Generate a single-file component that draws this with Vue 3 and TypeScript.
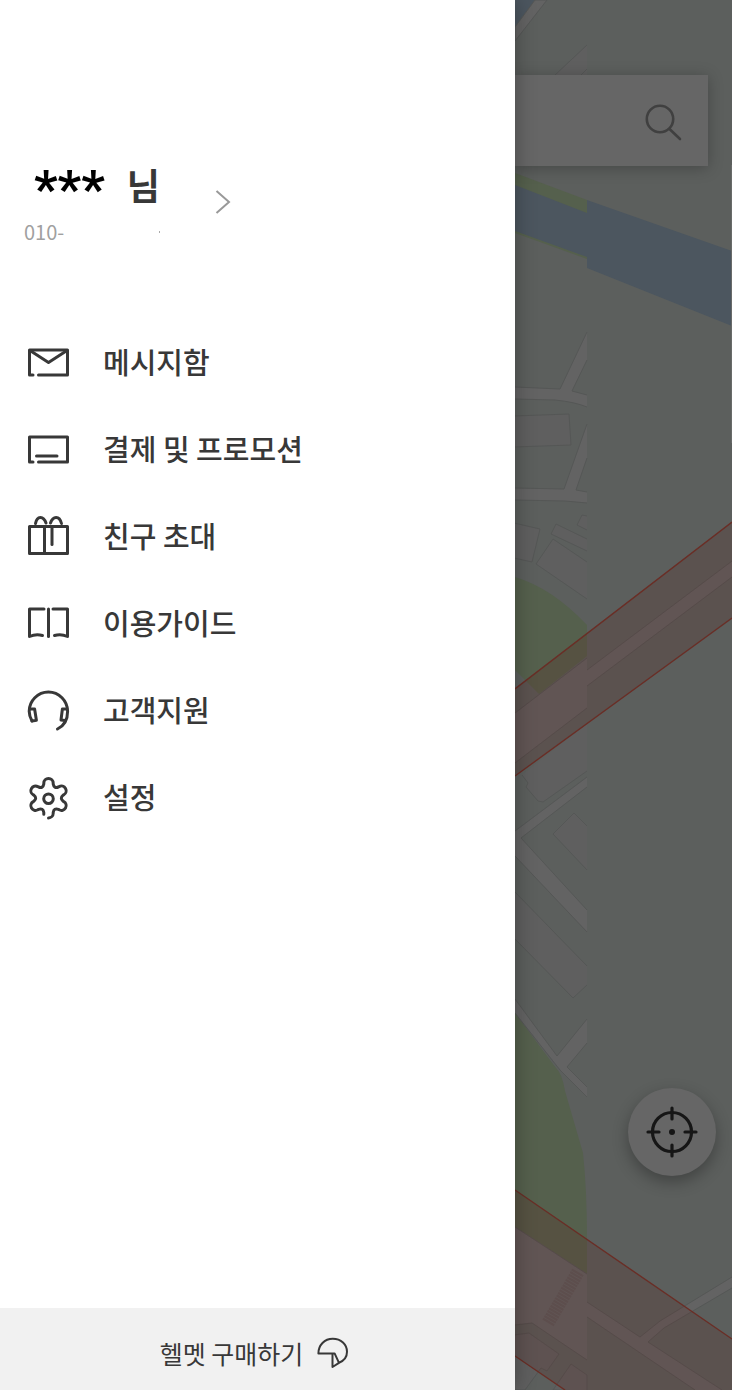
<script setup lang="ts">
interface MenuItem {
  id: string
  label: string
  paths: string[]
}

const round = (n: number) => Math.round(n * 100) / 100

/** Six-lobed gear outline, left open near the tip of the bottom lobe. */
function gearPath(cx: number, cy: number): string {
  const half = 4.7
  const tip = 15
  const base = 14.2
  const valley = 11
  const at = (angle: number, along: number, side: number) => {
    const r = (angle * Math.PI) / 180
    const x = cx + Math.cos(r) * along - Math.sin(r) * side
    const y = cy + Math.sin(r) * along + Math.cos(r) * side
    return `${round(x)} ${round(y)}`
  }
  let d = `M${at(90, tip + 1, half)}L${at(90, base, half)}`
  for (let i = 1; i <= 6; i++) {
    const a = 90 + i * 60
    d += `Q${at(a - 30, valley, 0)} ${at(a, base, -half)}L${at(a, tip, -half)}`
    d += i < 6
      ? `A${half} ${half} 0 0 1 ${at(a, tip, half)}L${at(a, base, half)}`
      : `A${half} ${half} 0 0 1 ${at(a, tip + half, 0)}`
  }
  return d
}

const menu: MenuItem[] = [
  {
    id: 'messages',
    label: '메시지함',
    paths: ['M7 34H3.5V9H41.5V34H12.5', 'M4 9.5L22.5 21.5L41 9.5'],
  },
  {
    id: 'payment',
    label: '결제 및 프로모션',
    paths: ['M7 34H3.5V9H41.5V34H12.5', 'M10.5 28H31'],
  },
  {
    id: 'invite',
    label: '친구 초대',
    paths: [
      'M3.5 11.5H41.5V38.5H3.5Z',
      'M18.5 11.5V38.5',
      'M26 11.5V29.5',
      'M9.5 8.5C11 0.5 17.5 0.5 20 8',
      'M24.5 8C27 0.5 33.5 0.5 35.5 8.5',
    ],
  },
  {
    id: 'guide',
    label: '이용가이드',
    paths: [
      'M18 7H3.5V34.5Q10 31.5 16.5 33.5',
      'M22.5 7V34.5',
      'M27 7H41.5V34.5Q35 31.5 28.5 33.5',
    ],
  },
  {
    id: 'support',
    label: '고객지원',
    paths: [
      'M6 32C4 28.5 3.2 25.5 3.2 22.3A19.2 19.2 0 0 1 41.6 22.3C41.6 30.5 38 37 31.5 40',
      'M4 20H8.6L10.4 31.3L6 32',
      'M41 20H36.4L35 31L39 31.5',
    ],
  },
  {
    id: 'settings',
    label: '설정',
    paths: [gearPath(22.5, 22.2), 'M27.3 22.7A4.8 4.8 0 1 1 17.7 22.7A4.8 4.8 0 1 1 27.3 22.7'],
  },
]
</script>

<template>
  <div class="screen">
    <aside class="drawer">
      <button class="profile" type="button">
        <span class="identity">
          <span class="name"><span class="mask">***</span><span class="suffix">님</span></span>
          <span class="phone"><span>010-</span><span class="speck"></span></span>
        </span>
        <svg class="chevron" viewBox="0 0 18 26" aria-hidden="true">
          <path d="M2.5 2L15 13L2.5 24" />
        </svg>
      </button>

      <nav class="menu">
        <a v-for="item in menu" :key="item.id" class="item" :href="`#${item.id}`">
          <svg class="icon" viewBox="0 0 44 44" aria-hidden="true">
            <path v-for="(d, i) in item.paths" :key="i" :d="d" />
          </svg>
          <span class="label">{{ item.label }}</span>
        </a>
      </nav>

      <a class="helmet" href="#helmet">
        <span>헬멧 구매하기</span>
        <svg viewBox="0 0 32 32" aria-hidden="true">
          <path d="M1.4 16.4C1.4 8 7.5 1.8 15.8 1.8C24 1.8 30 7.5 30 14.8C30 19.8 27 23.8 22 25.8L17.6 16.4Z" />
          <path d="M15.5 16.4V30L22 25.8" />
        </svg>
      </a>
    </aside>

    <main class="map">
      <svg class="tiles" viewBox="515 0 217 1390" preserveAspectRatio="xMinYMin slice" aria-hidden="true">
        <path class="water" d="M515 0H535L515 27Z" />
        <path class="road edge" d="M535 0H547L515 41V27Z" />
        <path class="block" d="M587 45L555 75H587Z" />
        <path class="line" d="M587 45L555 75M587 69L581 75" />
        <path class="green" d="M515 173L587 200V259L515 233Z" />
        <path class="water" d="M515 185L587 213V257L515 231Z" />
        <path class="water" d="M587 200L732 251V326L587 268Z" />

        <path class="road" d="M515 387L560 389L587 332V360L572 391L587 395V407Q575 402 555 400L515 399Z" />
        <path class="line" d="M515 387L560 389L587 332M587 360L572 391L587 395M515 399L555 400Q575 402 587 407" />
        <path class="block edge" d="M514 416L569 414L571 445L514 447Z" />
        <path class="road" d="M515 488L564 489L587 424V458L576 490L587 492V503L565 501L515 500Z" />
        <path class="line" d="M515 488L564 489L587 424M587 458L576 490L587 492M515 500L565 501L587 503" />
        <path class="block edge" d="M514 523L540 529L532 562L514 558Z" />
        <path class="block" d="M587 516L582 515L577 525L587 530ZM587 539L556 524L551 534L587 551ZM587 562L553 539L536 564L587 599Z" />
        <path class="line" d="M587 516L582 515L577 525L587 530M587 539L556 524L551 534L587 551M587 562L553 539L536 564L587 599" />
        <path class="green" d="M515 577Q552 588 587 625V656L539 694L515 670Z" />

        <path class="block" d="M522 775L587 723V771L543 802L538 801L526 787L528 783Z" />
        <path class="line" d="M522 775L528 783L526 787L538 801L543 802L587 771" />
        <path class="road" d="M587 777L515 831V856L587 932V910L521 838L587 787Z" />
        <path class="line" d="M587 777L515 831M515 856L587 932M587 910L521 838L587 787" />
        <path class="block" d="M587 826L574 813L553 834L587 870ZM515 892L587 966V985L573 998L515 939Z" />
        <path class="line" d="M587 826L574 813L553 834L587 870M515 892L587 966M587 985L573 998L515 939" />

        <path class="road" d="M515 999L557 1056L587 1019V1043L567 1067L587 1087V1097L560 1070L515 1013Z" />
        <path class="green" d="M515 1013L556 1068Q562 1073 565 1091L583 1153Q587 1190 587 1240V1274L515 1227Z" />
        <path class="line" d="M515 999L557 1056L587 1019M587 1043L567 1067L587 1087M587 1097L560 1070L515 1013" />

        <path class="road" d="M515 713L587 658V708L515 763Z" />
        <path class="road" d="M587 670L732 561V577L587 686Z" />
        <path class="line" d="M587 670L732 561M587 686L732 577M515 713L587 658M515 763L587 708" />
        <path class="road" d="M515 1227L587 1274V1360L532 1323L515 1325Z" />
        <path class="line" d="M515 1227L587 1274M587 1360L532 1323L515 1325" />
        <path class="block edge" d="M514 1335L529 1333L559 1354L547 1371L541 1368L525 1390H514ZM553 1390L571 1364L587 1375V1391Z" />
        <path class="road" d="M587 1302L640 1337L660 1321L732 1277V1288L664 1328L648 1342L722 1390H695L587 1317Z" />
        <path class="line" d="M587 1302L640 1337L660 1321L732 1277M732 1288L664 1328L648 1342L722 1390M695 1390L587 1317" />
        <path class="steps" d="M578 1272L548 1323" />

        <path class="zone" d="M515 688L732 522V619L515 776Z" />
        <path class="zone" d="M515 1190L732 1339V1390H564L515 1356Z" />
        <path class="border" d="M515 689L732 522M515 776L732 618M515 1190L732 1339M515 1356L565 1390" />
        <path class="seam" d="M731.5 165V443" />
      </svg>

      <div class="search">
        <button class="search-button" type="button" aria-label="검색">
          <svg viewBox="0 0 40 40" aria-hidden="true">
            <circle cx="17" cy="18" r="13.2" />
            <path d="M26.5 28L37 38" />
          </svg>
        </button>
      </div>

      <button class="locate" type="button" aria-label="현재 위치">
        <svg viewBox="0 0 52 52" aria-hidden="true">
          <circle cx="26" cy="26" r="19.5" />
          <path d="M26 2V13M26 39V50M2 26H13M39 26H50" />
          <circle class="dot" cx="26" cy="26" r="3" />
        </svg>
      </button>
    </main>
  </div>
</template>

<style>
body {
  margin: 0;
}
</style>

<style scoped>
.screen {
  display: grid;
  grid-template-columns: 515fr 217fr;
  min-height: 100vh;
  font-family: "Noto Sans CJK KR", "Noto Sans", sans-serif;
  color: #383838;
  background: #5c5f5d;
}

button {
  padding: 0;
  border: 0;
  background: none;
  font: inherit;
  color: inherit;
  text-align: left;
  cursor: pointer;
}

a {
  color: inherit;
  text-decoration: none;
}

svg {
  display: block;
  fill: none;
  stroke: currentColor;
}

.drawer {
  position: relative;
  z-index: 1;
  display: flex;
  flex-direction: column;
  min-width: 0;
  background: #fff;
  box-shadow: 0 0 20px rgba(0, 0, 0, 0.3);
}

.profile {
  display: flex;
  align-items: center;
  gap: 54px;
  margin: 159px 24px 74px 24px;
}

.identity {
  display: flex;
  flex-direction: column;
  gap: 8px;
}

.name {
  display: flex;
  align-items: flex-start;
  gap: 22px;
  height: 52px;
  padding-left: 10px;
  font-weight: 700;
}

.mask {
  color: #000;
  font-family: Roboto, "Noto Sans CJK KR", sans-serif;
  font-size: 52px;
  line-height: 62px;
}

.suffix {
  font-size: 36px;
  line-height: 50px;
}

.phone {
  display: flex;
  align-items: center;
  justify-content: space-between;
  font-size: 20px;
  line-height: 26px;
  color: #a0a0a0;
}

.speck {
  width: 1px;
  height: 2px;
  background: #aaa;
}

.chevron {
  width: 18px;
  height: 26px;
  stroke: #999;
  stroke-width: 2;
}

.menu {
  display: flex;
  flex-direction: column;
}

.item {
  display: flex;
  align-items: center;
  gap: 33px;
  height: 87px;
  padding: 0 26px;
  font-size: 29px;
  font-weight: 500;
}

.icon {
  flex: none;
  width: 44px;
  height: 44px;
  stroke-width: 3;
  stroke-linecap: round;
  stroke-linejoin: round;
}

.label {
  padding-bottom: 4px;
}

.helmet {
  display: flex;
  align-items: center;
  justify-content: center;
  gap: 14px;
  box-sizing: border-box;
  height: 82px;
  margin-top: auto;
  padding: 8px 6px 0 0;
  background: #f1f1f1;
  font-size: 25px;
}

.helmet svg {
  width: 32px;
  height: 32px;
  stroke-width: 2;
  stroke-linejoin: round;
}

.map {
  position: relative;
  display: flex;
  flex-direction: column;
  justify-content: space-between;
  min-width: 0;
  overflow: hidden;
}

.tiles {
  position: absolute;
  inset: 0;
  width: 100%;
  height: 100%;
  stroke: none;
}

.water { fill: #4c565f; }
.green { fill: #55604d; }
.road { fill: #636363; }
.block { fill: #5f5f5f; }
.edge, .line { stroke: #555756; stroke-width: 1; }
.zone { fill: rgba(92, 32, 24, 0.2); }
.border { stroke: #6a2e26; stroke-width: 1.4; }
.steps { stroke: #5e5a5a; stroke-width: 13; stroke-dasharray: 2 1; }
.seam { stroke: #696b6a; }

.search {
  position: relative;
  display: flex;
  align-items: center;
  justify-content: flex-end;
  height: 91px;
  margin: 75px 24px 0 0;
  padding-right: 25px;
  box-sizing: border-box;
  background: #666;
  box-shadow: 0 2px 14px rgba(0, 0, 0, 0.25);
}

.search-button svg {
  width: 40px;
  height: 40px;
  stroke: #404040;
  stroke-width: 2.6;
  stroke-linecap: round;
}

.locate {
  position: relative;
  display: grid;
  place-items: center;
  align-self: flex-end;
  width: 88px;
  height: 88px;
  margin: 0 16px 214px 0;
  border-radius: 50%;
  background: #666;
  box-shadow: 0 6px 16px rgba(0, 0, 0, 0.3);
}

.locate svg {
  width: 52px;
  height: 52px;
  stroke: #161616;
  stroke-width: 3.2;
  stroke-linecap: round;
}

.locate .dot {
  fill: #161616;
  stroke: none;
}
</style>
